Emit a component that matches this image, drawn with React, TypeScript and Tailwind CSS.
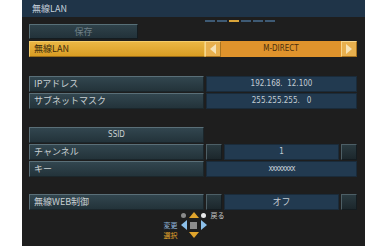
import React from 'react';

const jp = "font-['Noto_Sans_CJK_JP','Noto_Sans',sans-serif]";
const num = "font-['DejaVu_Sans_Condensed','DejaVu_Sans',sans-serif]";

const labelCell =
  'h-full flex items-center border border-[#5a6f78] border-b-[#1b262b] border-r-[#1b262b] bg-gradient-to-b from-[#32464f] to-[#23333a] text-[#c9d0d3]';
const valueCell =
  'h-full flex items-center justify-center bg-[#223a50] border border-[#1a2b3a] text-[#c3ccd3]';
const smallBox =
  'h-full w-[16px] shrink-0 bg-gradient-to-b from-[#2a3a40] to-[#1c272c] border border-[#4d5f66] border-b-[#141c20] border-r-[#141c20]';

const Label = ({ text, center }: { text: string; center?: boolean }) => (
  <div className={`${labelCell} w-[175px] shrink-0 ${center ? 'justify-center' : 'pl-[4px]'} ${jp} text-[9px]`}>
    {text}
  </div>
);

const Row = ({ children }: { children: React.ReactNode }) => (
  <div className="flex h-[16px] gap-[2px] w-[328px]">{children}</div>
);

export default function App() {
  return (
    <div className="w-[388px] h-[246px] bg-white flex pl-[22px]">
      <div className="w-[343px] h-[246px] bg-[#1e1e1e] flex flex-col">
        {/* header */}
        <div className={`h-[17px] bg-[#1f3448] flex items-center pl-[10px] text-[9px] text-[#c7d2dc] ${jp}`}>
          無線LAN
        </div>
        {/* page dashes */}
        <div className="flex gap-[2px] pl-[183px] mt-[3px] h-[2px]">
          {[0, 1, 2, 3, 4, 5].map((i) => (
            <div key={i} className={`w-[10px] h-[2px] ${i === 2 ? 'bg-[#d9a43a]' : 'bg-[#3e5a74]'}`} />
          ))}
        </div>

        <div className="flex flex-col pl-[7px] mt-[2px]">
          {/* save */}
          <div
            className={`w-[109px] h-[15px] flex items-center justify-center border border-[#587078] border-b-[#141c20] border-r-[#141c20] bg-gradient-to-b from-[#2f424a] to-[#22323a] text-[#6f8088] text-[9px] ${jp}`}
          >
            保存
          </div>

          {/* wireless LAN */}
          <div className="flex h-[16px] w-[328px] mt-[2px]">
            <div
              className={`w-[176px] shrink-0 h-full flex items-center pl-[4px] border border-[#f4cc6a] border-b-[#9a6c18] bg-gradient-to-b from-[#eab643] to-[#d99d22] text-[#3b2a0c] text-[9px] ${jp}`}
            >
              無線LAN
            </div>
            <div className="w-[16px] shrink-0 h-full flex items-center justify-center bg-[#e8b04e] border border-[#f6d58c] border-b-[#a8731f] border-r-[#a8731f]">
              <div className="w-0 h-0 border-y-[5px] border-y-transparent border-r-[6px] border-r-[#f7e3b6]" />
            </div>
            <div className={`flex-1 h-full flex items-center justify-center bg-[#df932c] text-[#4a2f0c] text-[8px] ${num}`}>
              M-DIRECT
            </div>
            <div className="w-[16px] shrink-0 h-full flex items-center justify-center bg-[#e8b04e] border border-[#f6d58c] border-b-[#a8731f] border-r-[#a8731f]">
              <div className="w-0 h-0 border-y-[5px] border-y-transparent border-l-[6px] border-l-[#f7e3b6]" />
            </div>
          </div>

          {/* IP */}
          <div className="flex flex-col gap-[1px] mt-[19px]">
            <Row>
              <Label text="IPアドレス" />
              <div className={`${valueCell} flex-1 text-[8px] ${num} whitespace-pre`}>192.168.  12.100</div>
            </Row>
            <Row>
              <Label text="サブネットマスク" />
              <div className={`${valueCell} flex-1 text-[8px] ${num} whitespace-pre`}>255.255.255.   0</div>
            </Row>
          </div>

          {/* SSID */}
          <div className="flex flex-col gap-[1px] mt-[18px]">
            <Row>
              <div className={`${labelCell} w-[175px] justify-center text-[8px] ${num}`}>SSID</div>
            </Row>
            <Row>
              <Label text="チャンネル" />
              <div className={smallBox} />
              <div className={`${valueCell} flex-1 text-[8px] ${num}`}>1</div>
              <div className={smallBox} />
            </Row>
            <Row>
              <Label text="キー" />
              <div className={`${valueCell} flex-1 text-[8px] ${num} tracking-[-1px]`}>xxxxxxxx</div>
            </Row>
          </div>

          {/* WEB */}
          <div className="mt-[17px]">
            <Row>
              <Label text="無線WEB制御" />
              <div className={smallBox} />
              <div className={`${valueCell} flex-1 text-[9px] ${jp}`}>オフ</div>
              <div className={smallBox} />
            </Row>
          </div>
        </div>

        {/* nav */}
        <div className="flex justify-center">
          <div className={`grid grid-cols-[40px_10px_10px_10px_40px] grid-rows-[10px_10px_10px] items-center text-[7px] leading-[10px] ${jp}`}>
            <div />
            <div className="flex justify-center">
              <div className="w-[5px] h-[5px] rounded-full bg-[#8a8a8a]" />
            </div>
            <div className="flex justify-center">
              <div className="w-0 h-0 border-x-[5px] border-x-transparent border-b-[6px] border-b-[#e0a42c]" />
            </div>
            <div className="flex justify-center">
              <div className="w-[5px] h-[5px] rounded-full bg-[#e8e8e8]" />
            </div>
            <div className="pl-[2px] text-[#c8c8c8]">戻る</div>

            <div className="text-right text-[#8fb4d8] pr-[1px]">変更</div>
            <div className="flex justify-center">
              <div className="w-0 h-0 border-y-[5px] border-y-transparent border-r-[6px] border-r-[#8cc0ea]" />
            </div>
            <div className="flex justify-center">
              <div className="w-[7px] h-[7px] bg-[#8c8c8c]" />
            </div>
            <div className="flex justify-center">
              <div className="w-0 h-0 border-y-[5px] border-y-transparent border-l-[6px] border-l-[#8cc0ea]" />
            </div>
            <div />

            <div className="text-right text-[#e0a42c] pr-[1px]">選択</div>
            <div />
            <div className="flex justify-center">
              <div className="w-0 h-0 border-x-[5px] border-x-transparent border-t-[6px] border-t-[#e0a42c]" />
            </div>
            <div />
            <div />
          </div>
        </div>
      </div>
    </div>
  );
}
